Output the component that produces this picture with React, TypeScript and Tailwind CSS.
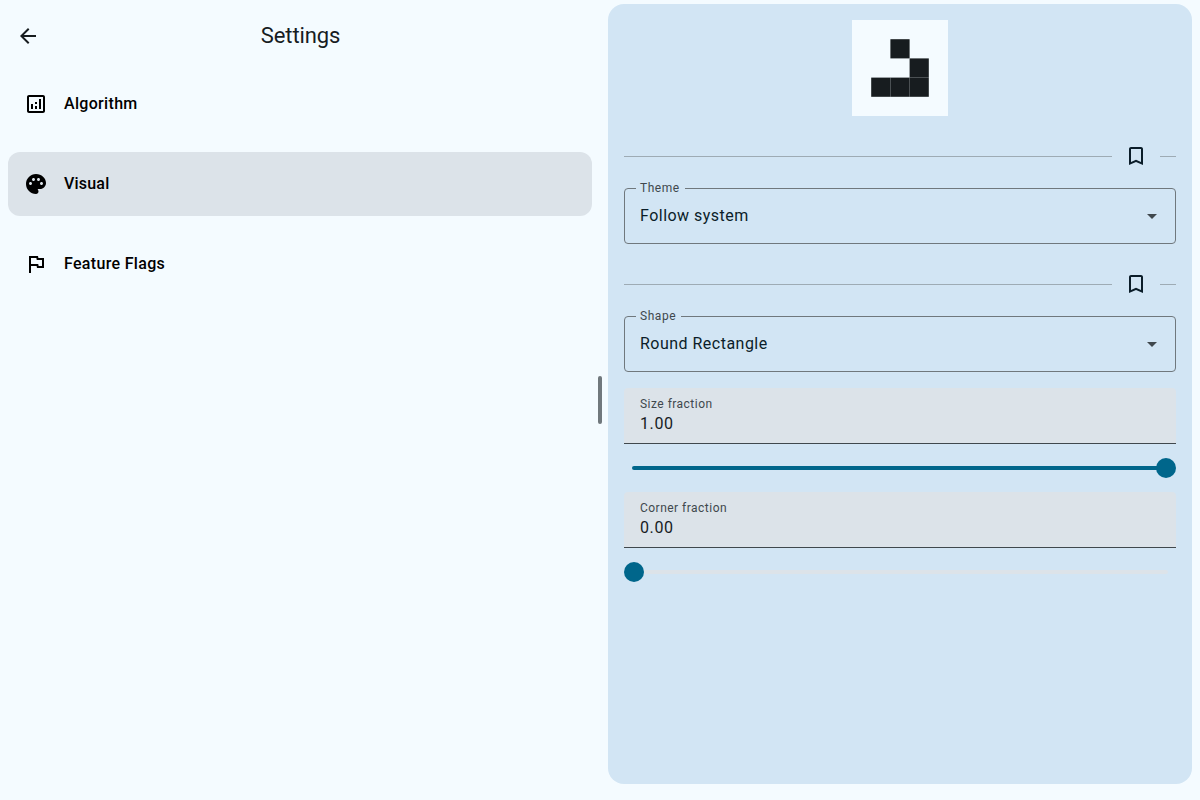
import type { ReactNode } from "react";

function Icon({ children, className = "" }: { children: ReactNode; className?: string }) {
  return (
    <svg viewBox="0 0 24 24" fill="currentColor" className={`h-6 w-6 shrink-0 ${className}`}>
      {children}
    </svg>
  );
}

const items = [
  {
    label: "Algorithm",
    selected: false,
    icon: (
      <>
        <path d="M19 3H5c-1.1 0-2 .9-2 2v14c0 1.1.9 2 2 2h14c1.1 0 2-.9 2-2V5c0-1.1-.9-2-2-2zm0 16H5V5h14v14z" />
        <path d="M7 12h2v5H7zM15 7h2v10h-2zM11 14h2v3h-2zM11 10h2v2h-2z" />
      </>
    ),
  },
  {
    label: "Visual",
    selected: true,
    icon: (
      <path d="M12 2C6.49 2 2 6.49 2 12s4.49 10 10 10c1.38 0 2.5-1.12 2.5-2.5 0-.61-.23-1.2-.64-1.67-.08-.1-.13-.21-.13-.33 0-.28.22-.5.5-.5H16c3.31 0 6-2.69 6-6 0-4.96-4.49-9-10-9zm5.5 11c-.83 0-1.5-.67-1.5-1.5s.67-1.5 1.5-1.5 1.5.67 1.5 1.5-.67 1.5-1.5 1.5zm-3-4c-.83 0-1.5-.67-1.5-1.5S13.67 6 14.5 6s1.5.67 1.5 1.5S15.33 9 14.5 9zM5 11.5c0-.83.67-1.5 1.5-1.5s1.5.67 1.5 1.5S7.33 13 6.5 13 5 12.33 5 11.5zm6-4c0 .83-.67 1.5-1.5 1.5S8 8.33 8 7.5 8.67 6 9.5 6s1.5.67 1.5 1.5z" />
    ),
  },
  {
    label: "Feature Flags",
    selected: false,
    icon: <path d="M12.36 6l.4 2H18v6h-3.36l-.4-2H7V6h5.36M14 4H5v17h2v-7h5.6l.4 2h7V6h-5.6L14 4z" />,
  },
];

const cells = [
  [2, 1],
  [3, 2],
  [1, 3],
  [2, 3],
  [3, 3],
];

function BookmarkDivider() {
  return (
    <div className="flex h-12 items-center">
      <div className="h-px flex-1 bg-[#9eabb4]" />
      <button className="mx-3 flex h-6 w-6 items-center justify-center text-[#0b1d29]">
        <Icon>
          <path d="M17 3H7c-1.1 0-1.99.9-1.99 2L5 21l7-3 7 3V5c0-1.1-.9-2-2-2zm0 15l-5-2.18L7 18V5h10v13z" />
        </Icon>
      </button>
      <div className="h-px w-4 bg-[#9eabb4]" />
    </div>
  );
}

function SelectField({ label, value }: { label: string; value: string }) {
  return (
    <fieldset className="mt-[2px] mb-4 h-[62px] rounded-[4px] border border-[#70787d] pr-[11px] pl-[11px]">
      <legend className="h-3 pr-[5px] pl-1 text-xs leading-3 tracking-[0.55px] text-[#40484d]">{label}</legend>
      <div className="flex h-[43px] items-center justify-between pl-1 text-base tracking-[0.48px] text-[#0b1d29]">
        <span>{value}</span>
        <Icon className="text-[#40484d]">
          <path d="M7 10l5 5 5-5z" />
        </Icon>
      </div>
    </fieldset>
  );
}

function FilledField({ label, value }: { label: string; value: string }) {
  return (
    <div className="flex h-14 flex-col rounded-t-[4px] border-b border-[#40484d] bg-[#dce3e9] px-4 pt-2">
      <span className="text-xs leading-4 tracking-[0.48px] text-[#40484d]">{label}</span>
      <span className="text-base leading-6 tracking-[0.6px] text-[#171c1f]">{value}</span>
    </div>
  );
}

function Slider({ full }: { full: boolean }) {
  return (
    <div className={`flex h-12 items-center ${full ? "flex-row-reverse pl-2" : "pr-2"}`}>
      <div className="h-5 w-5 shrink-0 rounded-full bg-[#00668b]" />
      <div
        className={`h-1 flex-1 ${full ? "-mr-2 rounded-l-full bg-[#00668b]" : "rounded-r-full bg-[#dce3e9]"}`}
      />
    </div>
  );
}

export default function App() {
  return (
    <div className="flex h-[800px] w-[1200px] overflow-hidden bg-[#f4fbff] font-['Roboto',sans-serif]">
      <section className="w-[592px] pl-2">
        <header className="grid h-[72px] grid-cols-[40px_1fr_40px] items-center">
          <button className="flex justify-center text-[#171c1f]">
            <Icon>
              <path d="M20 11H7.83l5.59-5.59L12 4l-8 8 8 8 1.41-1.41L7.83 13H20v-2z" />
            </Icon>
          </button>
          <h1 className="pl-px text-center text-[22px] leading-7 tracking-[-0.12px] text-[#171c1f]">Settings</h1>
        </header>
        <nav className="flex flex-col gap-4">
          {items.map((item) => (
            <a
              key={item.label}
              className={`flex h-16 items-center gap-4 rounded-xl px-4 text-base font-medium text-black ${
                item.selected ? "bg-[#dce3e9] tracking-[0.2px]" : "tracking-[0.32px]"
              }`}
            >
              <Icon>{item.icon}</Icon>
              <span>{item.label}</span>
            </a>
          ))}
        </nav>
      </section>

      <div className="flex w-4 items-center justify-center">
        <div className="h-12 w-1 rounded-full bg-[#70787d]" />
      </div>

      <main className="mt-1 mr-2 mb-4 flex-1 rounded-2xl bg-[#d2e5f4] p-4">
        <svg viewBox="0 0 96 96" className="mx-auto mb-4 block h-24 w-24 bg-[#f4fbff]">
          {cells.map(([x, y]) => (
            <rect key={`${x}-${y}`} x={x * 19.2} y={y * 19.2} width="19.2" height="19.2" fill="#171c1f" />
          ))}
        </svg>
        <BookmarkDivider />
        <SelectField label="Theme" value="Follow system" />
        <BookmarkDivider />
        <SelectField label="Shape" value="Round Rectangle" />
        <FilledField label="Size fraction" value="1.00" />
        <Slider full />
        <FilledField label="Corner fraction" value="0.00" />
        <Slider full={false} />
      </main>
    </div>
  );
}
